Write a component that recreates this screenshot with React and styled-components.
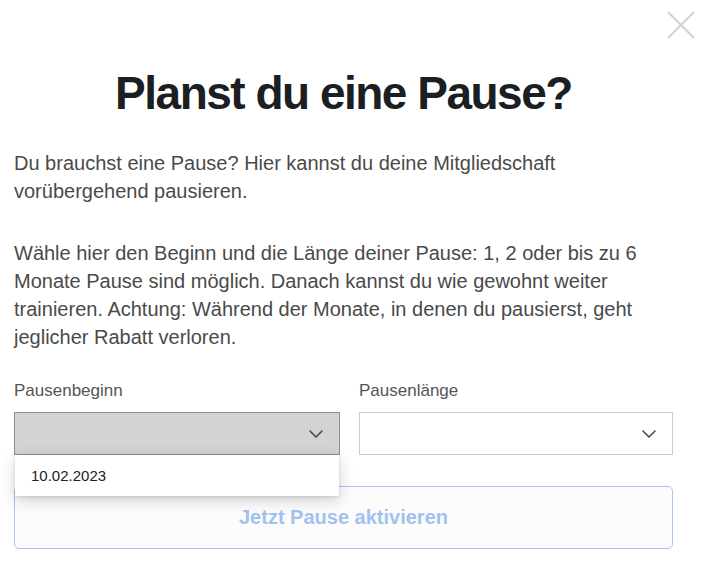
import React from "react";
import styled, { createGlobalStyle } from "styled-components";

const Global = createGlobalStyle`
  html, body { margin: 0; padding: 0; background: #ffffff; }
  body { font-family: "Liberation Sans", Arial, Helvetica, sans-serif; }
  * { box-sizing: border-box; }
`;

const Modal = styled.div`
  position: relative;
  width: 707px;
  height: 587px;
  padding: 66px 34px 0 14px;
  background: #fff;
  overflow: hidden;
`;

const Close = styled.button`
  position: absolute;
  top: 11px;
  right: 12px;
  width: 28px;
  height: 28px;
  padding: 0;
  border: none;
  background: transparent;
  cursor: pointer;
  display: flex;
  align-items: center;
  justify-content: center;
`;

const Title = styled.h1`
  margin: 0;
  font-size: 46px;
  line-height: 55px;
  font-weight: 700;
  letter-spacing: -1.5px;
  color: #1b1e22;
  text-align: center;
`;

const Text = styled.p`
  margin: ${(p) => p.$top}px 0 0 0;
  font-size: 20px;
  line-height: 28px;
  color: #4a4a4a;
`;

const Fields = styled.div`
  display: grid;
  grid-template-columns: 325.5px 1fr;
  column-gap: 19.5px;
  margin-top: 30px;
`;

const Field = styled.div`
  position: relative;
  display: flex;
  flex-direction: column;
`;

const Label = styled.label`
  font-size: 17px;
  line-height: 20px;
  color: #555555;
  margin-bottom: 11px;
`;

const SelectBox = styled.div`
  height: 43px;
  display: flex;
  align-items: center;
  justify-content: flex-end;
  padding-right: 16px;
  border: 1px solid ${(p) => (p.$open ? "#8f8f8f" : "#cccccc")};
  background: ${(p) => (p.$open ? "#d3d3d3" : "#ffffff")};
`;

const Menu = styled.ul`
  position: absolute;
  left: 1px;
  right: 1px;
  top: 74px;
  margin: 0;
  padding: 0;
  list-style: none;
  background: #fff;
  box-shadow: 0 4px 16px rgba(0, 0, 0, 0.18), 0 1px 3px rgba(0, 0, 0, 0.12);
  z-index: 2;
`;

const MenuItem = styled.li`
  height: 41px;
  display: flex;
  align-items: center;
  padding-left: 16px;
  font-size: 15px;
  color: #222;
`;

const SubmitButton = styled.button`
  display: block;
  width: 100%;
  height: 63px;
  margin-top: 31px;
  border: 1px solid #a8c5f0;
  border-radius: 5px;
  background: #fcfcfc;
  color: #a2c1ef;
  font-family: "Liberation Sans", Arial, Helvetica, sans-serif;
  font-size: 20px;
  font-weight: 700;
  cursor: default;
`;

const Chevron = () => (
  <svg width="14" height="8" viewBox="0 0 14 8" fill="none">
    <path d="M1 1l6 6 6-6" stroke="#444" strokeWidth="1.5" strokeLinecap="round" strokeLinejoin="round" />
  </svg>
);

export default function App() {
  return (
    <>
      <Global />
      <Modal>
        <Close aria-label="Schließen">
          <svg width="28" height="28" viewBox="0 0 28 28">
            <path d="M1 1L27 27M27 1L1 27" stroke="#d2d2d2" strokeWidth="2" />
          </svg>
        </Close>
        <Title>Planst du eine Pause?</Title>
        <Text $top={28}>
          Du brauchst eine Pause? Hier kannst du deine Mitgliedschaft vorübergehend pausieren.
        </Text>
        <Text $top={34}>
          Wähle hier den Beginn und die Länge deiner Pause: 1, 2 oder bis zu 6 Monate Pause sind
          möglich. Danach kannst du wie gewohnt weiter trainieren. Achtung: Während der Monate, in
          denen du pausierst, geht jeglicher Rabatt verloren.
        </Text>
        <Fields>
          <Field>
            <Label>Pausenbeginn</Label>
            <SelectBox $open>
              <Chevron />
            </SelectBox>
            <Menu>
              <MenuItem>10.02.2023</MenuItem>
            </Menu>
          </Field>
          <Field>
            <Label>Pausenlänge</Label>
            <SelectBox>
              <Chevron />
            </SelectBox>
          </Field>
        </Fields>
        <SubmitButton>Jetzt Pause aktivieren</SubmitButton>
      </Modal>
    </>
  );
}
